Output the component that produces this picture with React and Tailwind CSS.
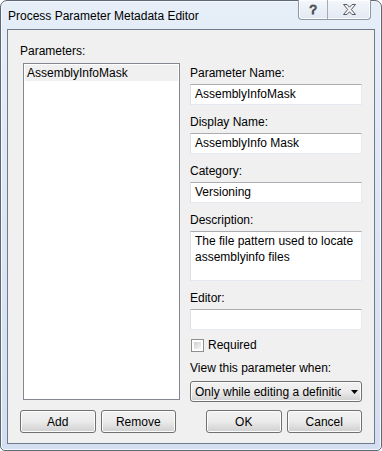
import React from 'react';

// Win7 style dialog: Process Parameter Metadata Editor
const font = { fontFamily: '"Liberation Sans", Arial, sans-serif' };

function Label({ children, className = '' }) {
    return <div className={`h-[16px] leading-[16px] text-[12px] text-black ${className}`}>{children}</div>;
}

function TextBox({ value, className = 'h-[21px]' }) {
    return (
        <div className={`w-[172px] bg-white border border-t-[#abadb3] border-l-[#dbdfe6] border-r-[#e3e9ef] border-b-[#e3e9ef] px-[4px] text-[12px] leading-[19px] ${className}`}>
            {value}
        </div>
    );
}

function Button({ children, className = '' }) {
    return (
        <div className={`h-[23px] w-[76px] rounded-[3px] border border-[#707070] bg-gradient-to-b from-[#f2f2f2] via-[#ebebeb] to-[#cfcfcf] shadow-[inset_0_0_0_1px_#fcfcfc] flex items-center justify-center text-[12px] text-black ${className}`}>
            {children}
        </div>
    );
}

export default function App() {
    return (
        <div style={font} className="w-[382px] h-[451px] overflow-hidden bg-white">
            <div className="w-[382px] h-[451px] rounded-t-[7px] rounded-b-[5px] border border-[#5d6776] bg-gradient-to-b from-[#e6eef8] via-[#dce6f3] to-[#d3dff0] px-[6px] pb-[6px] flex flex-col shadow-[inset_0_0_0_1px_#f6f9fd]">
                {/* title bar */}
                <div className="h-[28px] flex items-start justify-between">
                    <div className="pt-[8px] pl-[1px] text-[12px] leading-[15px] text-black">Process Parameter Metadata Editor</div>
                    <div className="flex h-[20px] mr-[4px] -mt-[1px] rounded-b-[4px] border border-t-0 border-[#8d97a6] bg-gradient-to-b from-[#f4f7fb] to-[#e2e9f3] shadow-[inset_0_0_0_1px_#fafcfe]">
                        <div className="w-[29px] flex items-center justify-center border-r border-[#a2abb8] text-[13px] text-transparent [-webkit-text-stroke:1px_#4a4f57]">?</div>
                        <div className="w-[42px] flex items-center justify-center">
                            <svg width="15" height="11" viewBox="0 0 15 11">
                                <path d="M1.5 0.5 H5 L7.5 3.2 L10 0.5 H13.5 L9.3 5.5 L13.5 10.5 H10 L7.5 7.8 L5 10.5 H1.5 L5.7 5.5 Z" fill="#f4f4f4" stroke="#555b63" strokeWidth="1" strokeLinejoin="round" />
                            </svg>
                        </div>
                    </div>
                </div>
                {/* client area */}
                <div className="flex-1 border border-[#6f7b8b] bg-[#f0f0f0] pl-[12px] pt-[13px] flex flex-col">
                    <div className="flex">
                        {/* left column */}
                        <div className="w-[160px] flex flex-col">
                            <Label>Parameters:</Label>
                            <div className="ml-[3px] mt-[4px] w-[157px] h-[337px] bg-white border border-[#828790] p-[1px]">
                                <div className="h-[16px] bg-[#f0f0f0] pl-[2px] text-[12px] leading-[16px]">AssemblyInfoMask</div>
                            </div>
                        </div>
                        {/* right column */}
                        <div className="ml-[10px] w-[172px] flex flex-col pt-[22px]">
                            <Label>Parameter Name:</Label>
                            <TextBox value="AssemblyInfoMask" className="mt-[3px] h-[21px]" />
                            <Label className="mt-[9px]">Display Name:</Label>
                            <TextBox value="AssemblyInfo Mask" className="mt-[3px] h-[21px]" />
                            <Label className="mt-[9px]">Category:</Label>
                            <TextBox value="Versioning" className="mt-[3px] h-[21px]" />
                            <Label className="mt-[9px]">Description:</Label>
                            <div className="mt-[3px] w-[172px] h-[50px] bg-white border border-t-[#abadb3] border-l-[#dbdfe6] border-r-[#e3e9ef] border-b-[#e3e9ef] px-[4px] pt-[1px] text-[12px] leading-[16px]">
                                The file pattern used to locate assemblyinfo files
                            </div>
                            <Label className="mt-[9px]">Editor:</Label>
                            <TextBox value="" className="mt-[3px] h-[21px]" />
                            <div className="mt-[7px] flex items-center h-[16px]">
                                <div className="ml-[1px] w-[13px] h-[13px] border border-[#8e8f8f] bg-white p-[2px]">
                                    <div className="w-full h-full bg-gradient-to-br from-[#cbcfd5] to-[#f6f6f6]" />
                                </div>
                                <span className="ml-[4px] text-[12px] leading-[16px]">Required</span>
                            </div>
                            <Label className="mt-[7px]">View this parameter when:</Label>
                            <div className="mt-[5px] h-[21px] w-[172px] rounded-[3px] border border-[#707070] bg-gradient-to-b from-[#f2f2f2] via-[#ebebeb] to-[#cfcfcf] shadow-[inset_0_0_0_1px_#fcfcfc] flex items-center">
                                <div className="ml-[4px] w-[146px] overflow-hidden whitespace-nowrap text-[12px] leading-[16px]">Only while editing a definition</div>
                                <svg className="ml-[10px]" width="7" height="4" viewBox="0 0 7 4">
                                    <path d="M0 0 H7 L3.5 4 Z" fill="#000" />
                                </svg>
                            </div>
                        </div>
                    </div>
                    {/* button row */}
                    <div className="mt-[8px] flex w-[342px]">
                        <Button>Add</Button>
                        <Button className="ml-[5px]">Remove</Button>
                        <Button className="ml-[30px]">OK</Button>
                        <Button className="ml-[5px]">Cancel</Button>
                    </div>
                </div>
            </div>
        </div>
    );
}
